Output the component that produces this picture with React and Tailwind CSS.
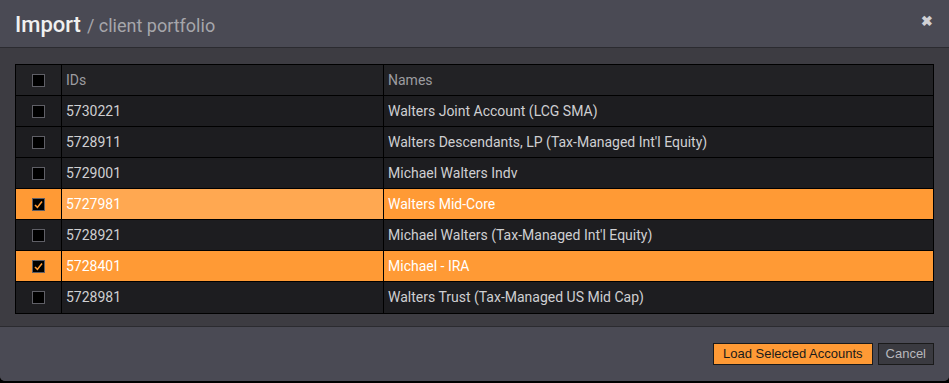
import { useState } from 'react';

const ACCOUNTS = [
  { id: '5730221', name: 'Walters Joint Account (LCG SMA)' },
  { id: '5728911', name: "Walters Descendants, LP (Tax-Managed Int'l Equity)" },
  { id: '5729001', name: 'Michael Walters Indv' },
  { id: '5727981', name: 'Walters Mid-Core' },
  { id: '5728921', name: "Michael Walters (Tax-Managed Int'l Equity)" },
  { id: '5728401', name: 'Michael - IRA' },
  { id: '5728981', name: 'Walters Trust (Tax-Managed US Mid Cap)' },
];

function Box({ checked }) {
  return (
    <span className="w-[13px] h-[13px] border border-[#5f5f66] bg-black flex items-center justify-center">
      {checked && (
        <svg width="9" height="9" viewBox="0 0 9 9">
          <path d="M1 5 L3.4 7.4 L8 1.6" fill="none" stroke="#ff9a33" strokeWidth="1.6" />
        </svg>
      )}
    </span>
  );
}

export default function App() {
  const [selected, setSelected] = useState(['5727981', '5728401']);
  const [hover, setHover] = useState('5727981');

  const toggle = (id) => {
    setSelected(selected.includes(id) ? selected.filter((x) => x !== id) : [...selected, id]);
  };

  const allChecked = selected.length === ACCOUNTS.length;

  return (
    <div className="w-[949px] h-[383px] bg-black" style={{ fontFamily: 'Roboto, "Liberation Sans", sans-serif' }}>
      <div className="h-[381px] flex flex-col bg-[#3d3c42] rounded-b-[5px] overflow-hidden">
        <div className="h-[48px] shrink-0 bg-[#4a4a54] border-b border-[#2b2b30] flex items-center justify-between pl-[15px] pr-[16px]">
          <div className="flex items-baseline gap-[6px] pt-[1px]">
            <span className="text-[22px] font-medium text-[#f0f0f0]">Import</span>
            <span className="text-[18px] text-[#a6a6ab]">/ client portfolio</span>
          </div>
          <span className="text-[#d0d0d4] text-[14px] font-bold leading-none mb-[6px]">✖</span>
        </div>

        <div className="flex-1 px-[15px] pt-[16px] pb-[12px] border-b border-[#2b2b30]">
          <div className="border border-black bg-[#1d1d20] text-[14px]">
            <div className="flex h-[31px] bg-[#222225] border-b border-black text-[#9c9ca0]">
              <div className="w-[46px] border-r border-black flex items-center justify-center" onClick={() => setSelected(allChecked ? [] : ACCOUNTS.map((a) => a.id))}>
                <Box checked={allChecked} />
              </div>
              <div className="w-[322px] border-r border-black flex items-center pl-[4px]">IDs</div>
              <div className="flex-1 flex items-center pl-[4px]">Names</div>
            </div>
            {ACCOUNTS.map((a, i) => {
              const on = selected.includes(a.id);
              return (
                <div
                  key={a.id}
                  onClick={() => toggle(a.id)}
                  onMouseEnter={() => setHover(a.id)}
                  className={`flex h-[31px] ${i < ACCOUNTS.length - 1 ? 'border-b border-black' : ''} ${on ? 'bg-[#ff9a35] text-white' : 'text-[#cfcfd2]'}`}
                >
                  <div className="w-[46px] border-r border-black flex items-center justify-center">
                    <Box checked={on} />
                  </div>
                  <div className={`w-[322px] border-r border-black flex items-center pl-[4px] ${on && hover === a.id ? 'bg-[#ffa851]' : ''}`}>{a.id}</div>
                  <div className="flex-1 flex items-center pl-[4px]">{a.name}</div>
                </div>
              );
            })}
          </div>
        </div>

        <div className="flex-1 bg-[#4a4a54] flex items-center justify-end gap-[5px] pr-[15px]" style={{ fontFamily: '"Liberation Sans", Arial, sans-serif' }}>
          <button className="h-[22px] px-[9px] bg-[#ff9a35] border border-[#1a1a1a] text-[13px] text-[#1a1a1a]">Load Selected Accounts</button>
          <button className="h-[22px] px-[7px] bg-[#3a3a40] border border-[#1a1a1a] text-[13px] text-[#b8b8bc]">Cancel</button>
        </div>
      </div>
    </div>
  );
}
